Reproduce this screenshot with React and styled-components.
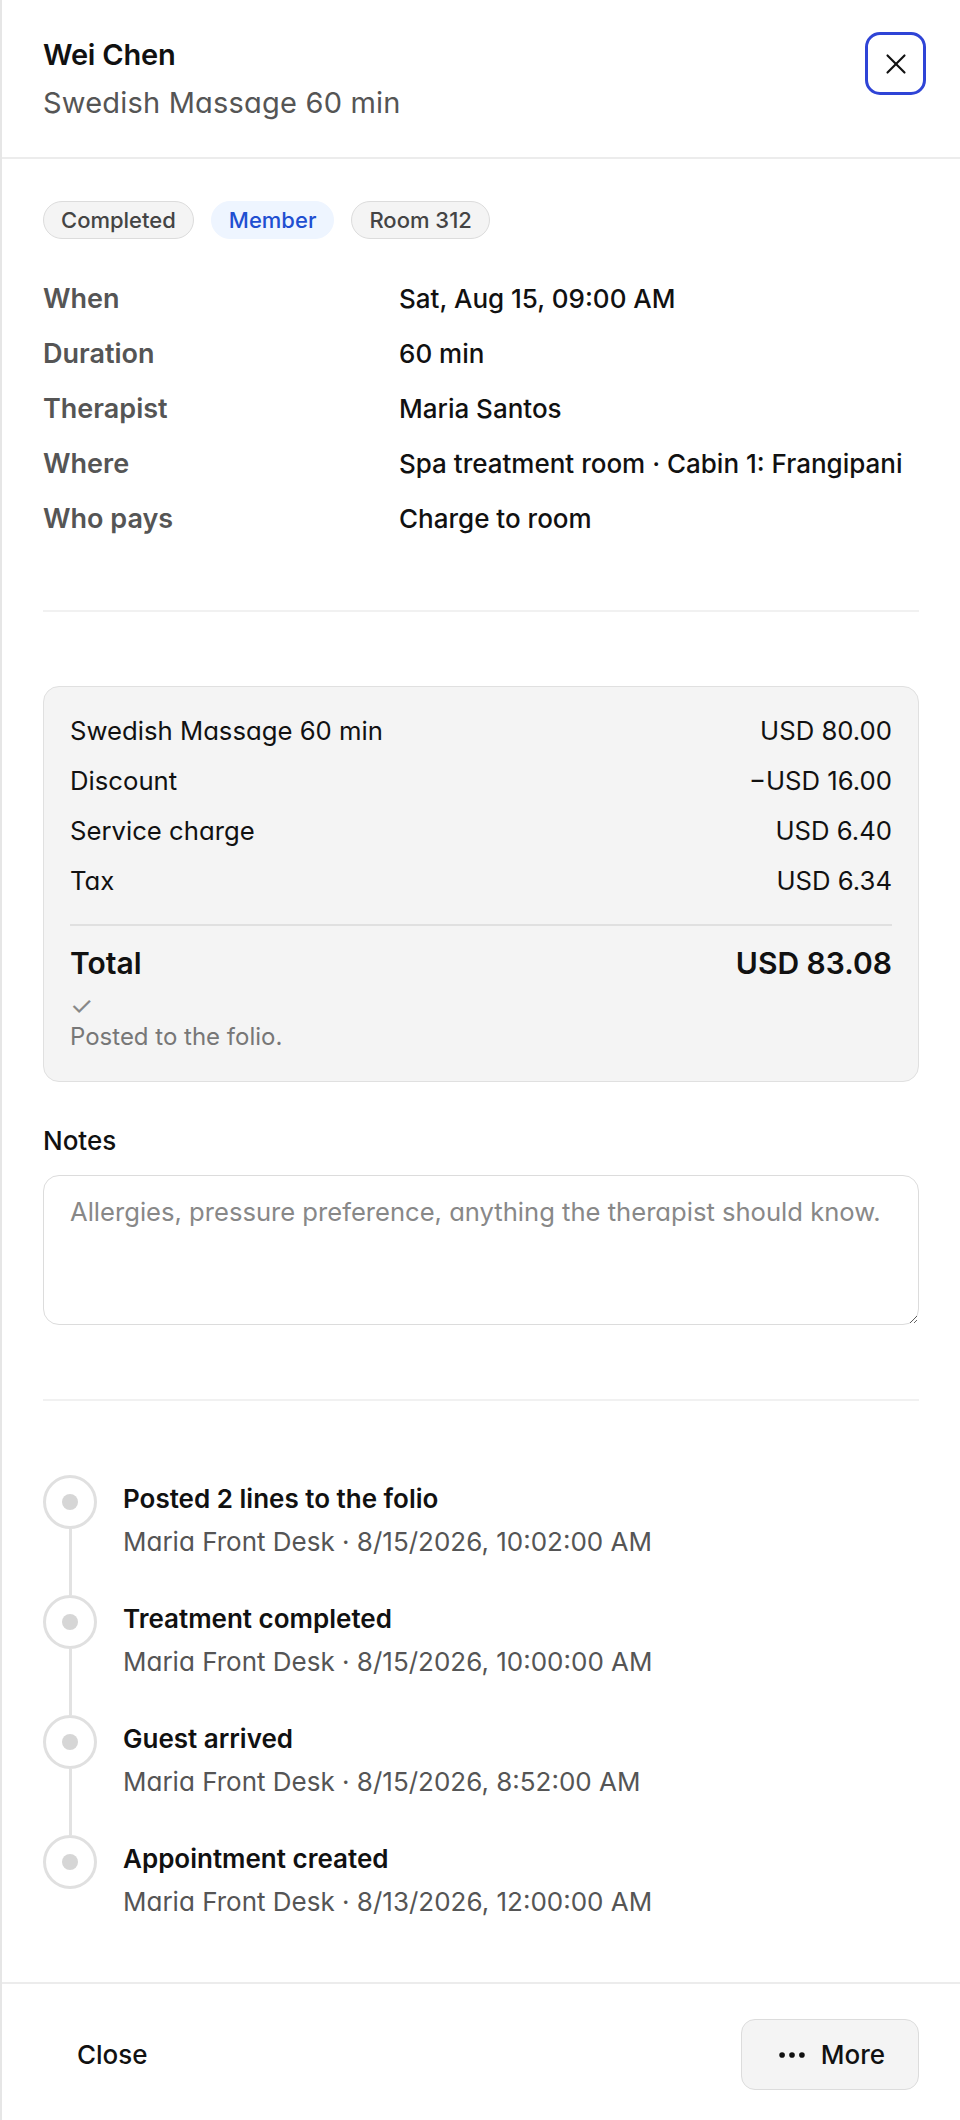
import React from "react";
import styled, { createGlobalStyle } from "styled-components";
import { X, Ellipsis } from "lucide-react";

const GlobalStyle = createGlobalStyle`
  html, body {
    margin: 0;
    padding: 0;
    background: #fff;
  }
  body {
    font-family: Inter, "Noto Sans", "Liberation Sans", sans-serif;
    color: #111;
    -webkit-font-smoothing: antialiased;
  }
  * {
    box-sizing: border-box;
  }
`;

const details = [
  { label: "When", value: "Sat, Aug 15, 09:00 AM" },
  { label: "Duration", value: "60 min" },
  { label: "Therapist", value: "Maria Santos" },
  { label: "Where", value: "Spa treatment room · Cabin 1: Frangipani" },
  { label: "Who pays", value: "Charge to room" },
];

const lines = [
  { label: "Swedish Massage 60 min", amount: "USD 80.00" },
  { label: "Discount", amount: "−USD 16.00" },
  { label: "Service charge", amount: "USD 6.40" },
  { label: "Tax", amount: "USD 6.34" },
];

const activity = [
  { title: "Posted 2 lines to the folio", meta: "Maria Front Desk · 8/15/2026, 10:02:00 AM" },
  { title: "Treatment completed", meta: "Maria Front Desk · 8/15/2026, 10:00:00 AM" },
  { title: "Guest arrived", meta: "Maria Front Desk · 8/15/2026, 8:52:00 AM" },
  { title: "Appointment created", meta: "Maria Front Desk · 8/13/2026, 12:00:00 AM" },
];

const App = () => {
  return (
    <>
      <GlobalStyle />
      <Panel>
        <Header>
          <HeaderText>
            <Title>Wei Chen</Title>
            <Subtitle>Swedish Massage 60 min</Subtitle>
          </HeaderText>
          <CloseIcon aria-label="Close">
            <X size={34} strokeWidth={1.5} />
          </CloseIcon>
        </Header>

        <Body>
          <Section>
            <Chips>
              <Chip>Completed</Chip>
              <Chip $tone="blue">Member</Chip>
              <Chip>Room 312</Chip>
            </Chips>
            <DetailGrid>
              {details.map((d) => (
                <React.Fragment key={d.label}>
                  <DetailLabel>{d.label}</DetailLabel>
                  <DetailValue>{d.value}</DetailValue>
                </React.Fragment>
              ))}
            </DetailGrid>
          </Section>

          <Divider />

          <Section>
            <PriceCard>
              <PriceLines>
                {lines.map((l) => (
                  <PriceRow key={l.label}>
                    <span>{l.label}</span>
                    <span>{l.amount}</span>
                  </PriceRow>
                ))}
              </PriceLines>
              <TotalRow>
                <span>Total</span>
                <span>USD 83.08</span>
              </TotalRow>
              <Check>✓</Check>
              <Posted>Posted to the folio.</Posted>
            </PriceCard>

            <NotesLabel htmlFor="notes">Notes</NotesLabel>
            <NotesArea
              id="notes"
              placeholder="Allergies, pressure preference, anything the therapist should know."
            />
          </Section>

          <Divider />

          <Timeline>
            {activity.map((a, i) => (
              <Event key={a.title}>
                <Rail>
                  <Node>
                    <NodeDot />
                  </Node>
                  {i < activity.length - 1 && <RailLine />}
                </Rail>
                <EventText $last={i === activity.length - 1}>
                  <EventTitle>{a.title}</EventTitle>
                  <EventMeta>{a.meta}</EventMeta>
                </EventText>
              </Event>
            ))}
          </Timeline>
        </Body>

        <Footer>
          <GhostButton>Close</GhostButton>
          <MoreButton>
            <Ellipsis size={34} strokeWidth={2} />
            More
          </MoreButton>
        </Footer>
      </Panel>
    </>
  );
};

export default App;

const Panel = styled.div`
  width: 960px;
  min-height: 2120px;
  border-left: 2px solid #e6e6e6;
  display: flex;
  flex-direction: column;
  background: #fff;
`;

const Header = styled.header`
  display: flex;
  justify-content: space-between;
  align-items: flex-start;
  padding: 38px 34px 37px 41px;
  border-bottom: 2px solid #ececec;
`;

const HeaderText = styled.div`
  display: flex;
  flex-direction: column;
  gap: 14px;
`;

const Title = styled.h1`
  margin: 0;
  font-size: 29px;
  line-height: 34px;
  font-weight: 600;
  color: #111;
  letter-spacing: -0.2px;
`;

const Subtitle = styled.p`
  margin: 0;
  font-size: 29px;
  line-height: 34px;
  font-weight: 400;
  color: #555;
  letter-spacing: 0.2px;
  font-feature-settings: "cv11";
`;

const CloseIcon = styled.button`
  width: 61px;
  height: 63px;
  margin-top: -6px;
  border: 3px solid #2f44d6;
  border-radius: 15px;
  background: #fff;
  color: #111;
  display: flex;
  align-items: center;
  justify-content: center;
  padding: 0;
  cursor: pointer;
`;

const Body = styled.main`
  flex: 1;
  display: flex;
  flex-direction: column;
  padding: 42px 41px 63px 41px;
`;

const Section = styled.section`
  display: flex;
  flex-direction: column;
`;

const Chips = styled.div`
  display: flex;
  gap: 17px;
`;

const Chip = styled.span`
  display: inline-flex;
  align-items: center;
  height: 38px;
  padding: 0 17px;
  border-radius: 999px;
  font-size: 22px;
  font-weight: 500;
  border: 1.5px solid ${(p) => (p.$tone === "blue" ? "#eef5ff" : "#dcdcdc")};
  background: ${(p) => (p.$tone === "blue" ? "#eef5ff" : "#f4f4f4")};
  color: ${(p) => (p.$tone === "blue" ? "#1f4fd1" : "#444")};
`;

const DetailGrid = styled.dl`
  margin: 43px 0 0;
  display: grid;
  grid-template-columns: 356px 1fr;
  row-gap: 21px;
  line-height: 34px;
`;

const DetailLabel = styled.dt`
  font-size: 27px;
  font-weight: 600;
  color: #555;
`;

const DetailValue = styled.dd`
  margin: 0;
  font-size: 26px;
  font-weight: 500;
  color: #111;
`;

const Divider = styled.hr`
  width: 100%;
  margin: 74px 0;
  border: 0;
  border-top: 2px solid #f1f1f1;
`;

const PriceCard = styled.div`
  background: #f4f4f4;
  border: 1.5px solid #e0e0e0;
  border-radius: 16px;
  padding: 27px 26px 29px 26px;
  display: flex;
  flex-direction: column;
`;

const PriceLines = styled.div`
  display: flex;
  flex-direction: column;
  gap: 16px;
  padding-bottom: 26px;
  border-bottom: 2px solid #e0e0e0;
`;

const PriceRow = styled.div`
  display: flex;
  justify-content: space-between;
  font-size: 25.7px;
  line-height: 34px;
  color: #111;
  font-feature-settings: "cv11";
`;

const TotalRow = styled.div`
  display: flex;
  justify-content: space-between;
  margin-top: 18px;
  font-size: 30px;
  line-height: 38px;
  font-weight: 600;
  color: #111;
`;

const Check = styled.span`
  margin-top: 12px;
  font-size: 26px;
  line-height: 24px;
  color: #888;
`;

const Posted = styled.span`
  margin-top: 4px;
  font-size: 24px;
  line-height: 30px;
  color: #777;
`;

const NotesLabel = styled.label`
  margin-top: 43px;
  font-size: 26px;
  line-height: 32px;
  font-weight: 500;
  color: #111;
`;

const NotesArea = styled.textarea`
  margin-top: 18px;
  height: 150px;
  width: 100%;
  resize: vertical;
  border: 1.5px solid #dcdcdc;
  border-radius: 16px;
  padding: 19px 12px 19px 26px;
  font-family: inherit;
  font-size: 25.6px;
  line-height: 34px;
  color: #111;
  background: #fff;
  font-feature-settings: "cv11";
  overflow: hidden;
  &::placeholder {
    color: #888;
  }
`;

const Timeline = styled.ol`
  list-style: none;
  margin: 0;
  padding: 0;
  display: flex;
  flex-direction: column;
`;

const Event = styled.li`
  display: flex;
  gap: 26px;
`;

const Rail = styled.div`
  width: 54px;
  display: flex;
  flex-direction: column;
  align-items: center;
  flex-shrink: 0;
`;

const Node = styled.div`
  width: 54px;
  height: 54px;
  border-radius: 50%;
  border: 3px solid #e0e0e0;
  background: #fff;
  display: flex;
  align-items: center;
  justify-content: center;
`;

const NodeDot = styled.span`
  width: 16px;
  height: 16px;
  border-radius: 50%;
  background: #d6d6d6;
`;

const RailLine = styled.div`
  flex: 1;
  width: 3px;
  background: #e2e2e2;
`;

const EventText = styled.div`
  display: flex;
  flex-direction: column;
  gap: 9px;
  padding-top: 7px;
  padding-bottom: ${(p) => (p.$last ? "0" : "36px")};
`;

const EventTitle = styled.span`
  font-size: 26px;
  line-height: 34px;
  font-weight: 600;
  color: #111;
`;

const EventMeta = styled.span`
  font-size: 26px;
  line-height: 34px;
  color: #555;
  font-feature-settings: "cv11";
`;

const Footer = styled.footer`
  display: flex;
  justify-content: space-between;
  align-items: center;
  padding: 35px 41px 32px 41px;
  border-top: 2px solid #ececec;
`;

const GhostButton = styled.button`
  height: 71px;
  padding: 0 34px;
  border: 0;
  background: transparent;
  font-family: inherit;
  font-size: 26px;
  font-weight: 500;
  color: #111;
  cursor: pointer;
`;

const MoreButton = styled.button`
  height: 71px;
  width: 178px;
  display: flex;
  align-items: center;
  justify-content: center;
  gap: 12px;
  border: 1.5px solid #dcdcdc;
  border-radius: 14px;
  background: #f4f4f4;
  font-family: inherit;
  font-size: 26px;
  font-weight: 500;
  color: #111;
  cursor: pointer;
`;
